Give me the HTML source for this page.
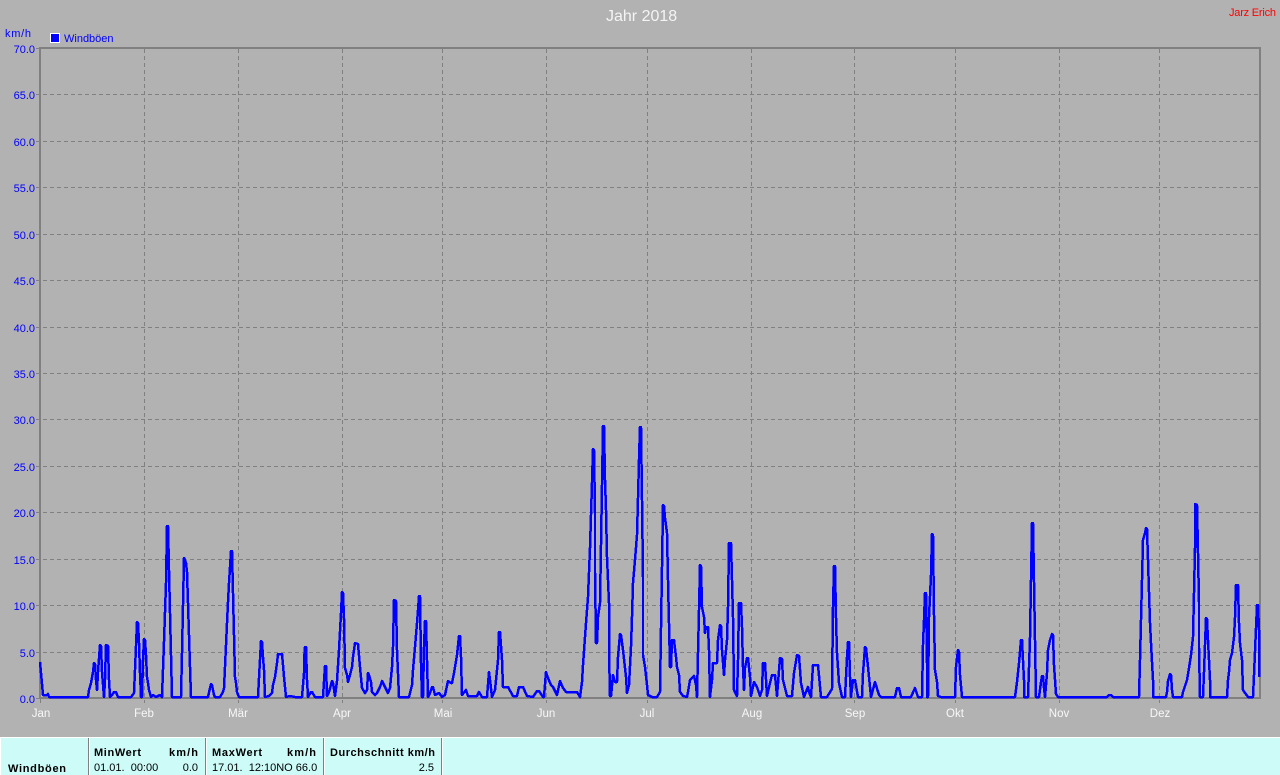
<!DOCTYPE html>
<html><head><meta charset="utf-8"><style>
html,body{margin:0;padding:0;width:1280px;height:775px;overflow:hidden;background:#b2b2b2}
svg{display:block}
text{font-family:"Liberation Sans",sans-serif;font-size:11px}
.y{fill:#0000ff;text-anchor:end}
.m{fill:#f8f8f8;text-anchor:middle;font-size:11.5px}
.b{font-weight:bold;fill:#000}
.t{fill:#000}
.r{text-anchor:end}
</style></head><body>
<svg width="1280" height="775" viewBox="0 0 1280 775" xmlns="http://www.w3.org/2000/svg">
<rect width="1280" height="775" fill="#b2b2b2"/>
<g stroke="#808080" stroke-width="1" stroke-dasharray="4 3" shape-rendering="crispEdges" fill="none">
<path d="M36 94.5H1259M36 141.5H1259M36 187.5H1259M36 234.5H1259M36 280.5H1259M36 327.5H1259M36 373.5H1259M36 419.5H1259M36 466.5H1259M36 512.5H1259M36 559.5H1259M36 605.5H1259M36 652.5H1259"/>
<path d="M144.5 49V703M238.5 49V703M342.5 49V703M442.5 49V703M546.5 49V703M647.5 49V703M751.5 49V703M854.5 49V703M955.5 49V703M1059.5 49V703M1159.5 49V703"/>
</g>
<path d="M40 48H1260V698H40Z" fill="none" stroke="#808080" stroke-width="2.4" shape-rendering="crispEdges"/>
<path d="M36 48.5H40M36 698.5H40M40.5 698V703" stroke="#808080" stroke-width="1" shape-rendering="crispEdges"/>
<polyline fill="none" stroke="#0000ff" stroke-width="2.5" stroke-linejoin="round" shape-rendering="crispEdges" points="40,662 41,673 42,684 43,695 47,695 48,694 49,697 50,697 79,697 80,697 88,697 89,690 91,683 93,672 94,663 95,664 96,680 97,690 98,672 100,645 101,646 102,672 104,697 105,680 106,645 108,646 109,680 110,697 112,695 114,692 116,692 118,697 131,697 134,693 135,670 137,622 138,623 139,643 140,673 141,697 142,697 143,660 144,639 145,640 146,655 147,677 148,683 149,690 151,697 153,695 156,697 160,695 162,697 164,642 166,583 167,526 168,526 169,570 170,613 171,655 172,697 181,697 182,653 183,605 184,558 185,560 186,563 187,572 188,603 189,635 190,667 191,697 197,697 202,697 208,697 210,688 211,684 212,685 214,695 215,697 220,697 223,692 224,688 225,667 226,645 227,623 228,602 229,583 230,567 231,551 232,551 233,593 234,635 235,677 236,683 237,692 239,697 257,697 258,697 259,678 261,641 262,642 263,657 264,670 265,697 269,696 272,693 273,685 275,677 277,663 278,654 282,654 283,665 284,677 286,697 290,696 295,697 302,697 303,685 304,673 304,660 305,647 306,647 307,680 308,697 311,692 312,692 315,697 320,697 323,697 325,666 326,666 327,696 329,692 332,681 333,683 335,696 337,681 339,650 341,613 342,592 343,593 344,618 345,668 347,675 348,682 350,675 352,667 353,657 355,643 358,644 360,667 362,688 365,693 367,690 368,673 369,675 371,682 372,692 375,695 377,693 380,687 382,681 385,687 388,693 390,688 392,667 393,647 394,600 396,601 397,650 399,697 409,697 412,685 413,670 415,647 417,623 418,610 419,596 420,596 421,663 422,697 423,697 424,647 425,621 426,621 427,660 428,697 430,693 432,687 433,687 435,695 437,694 439,693 442,697 445,695 448,681 451,683 452,683 454,673 457,655 459,636 460,636 461,657 462,695 466,690 468,696 477,696 479,692 482,697 487,697 489,672 490,680 492,697 495,690 498,660 499,632 500,632 502,660 503,687 508,687 513,696 517,696 519,687 523,687 527,696 533,697 537,691 539,691 543,697 544,697 546,672 548,678 551,685 553,687 557,695 560,681 563,688 566,692 577,692 580,697 582,682 583,665 586,623 588,597 590,548 591,515 592,483 593,449 594,450 595,513 595,573 596,643 597,643 598,617 600,603 601,545 602,485 603,426 604,426 605,480 606,510 607,557 609,603 609,650 610,696 611,696 613,675 615,682 617,682 618,657 620,634 621,635 623,650 626,677 627,693 629,685 631,647 632,617 633,583 635,560 637,535 638,498 639,460 640,427 641,427 642,500 643,577 643,655 645,667 647,685 648,695 652,697 657,697 660,692 661,628 662,567 663,505 664,506 665,518 667,533 668,580 669,623 670,667 671,667 672,640 674,640 676,657 677,667 679,675 680,692 683,696 687,697 688,692 690,680 694,676 696,685 697,697 698,653 699,610 700,565 701,566 702,607 704,617 705,633 706,627 708,627 709,650 710,697 712,680 713,663 717,663 718,640 720,625 721,626 722,650 724,675 725,660 727,640 728,607 729,543 731,543 732,580 733,617 734,690 737,696 738,660 739,603 741,603 742,627 743,667 744,690 745,668 747,658 748,658 750,677 751,696 754,682 757,687 760,696 762,690 763,663 765,663 767,696 770,683 772,675 775,675 777,696 780,658 782,659 783,680 787,696 792,696 794,673 797,655 799,656 801,683 804,697 808,687 809,692 811,697 813,665 818,665 821,697 827,697 832,689 833,607 834,566 835,566 836,618 837,653 839,683 842,697 845,697 847,657 848,642 849,642 850,677 851,697 853,680 855,680 858,697 862,697 863,673 865,647 866,648 868,667 871,697 875,682 879,695 881,697 895,697 897,688 899,688 901,697 911,697 915,688 918,697 922,697 923,645 924,620 925,593 926,593 927,663 927,697 928,697 929,617 931,575 932,534 933,535 934,615 935,670 937,682 938,696 941,697 945,697 947,697 953,697 955,697 956,667 958,650 959,652 960,675 962,697 968,697 969,697 1015,697 1017,682 1019,663 1021,640 1022,640 1024,680 1024,697 1028,697 1030,638 1031,580 1032,523 1033,523 1034,582 1035,640 1036,697 1039,697 1041,682 1042,676 1043,676 1044,688 1045,697 1047,673 1048,650 1050,640 1052,634 1053,635 1054,665 1056,694 1058,697 1107,697 1109,695 1111,695 1113,697 1139,697 1140,660 1141,620 1142,580 1143,540 1145,533 1146,528 1147,529 1148,560 1149,592 1150,623 1151,643 1152,662 1153,680 1153,697 1166,697 1167,692 1168,681 1170,674 1171,675 1172,690 1173,697 1182,697 1183,692 1187,680 1189,668 1191,655 1193,637 1194,593 1195,548 1195,504 1197,505 1198,553 1199,602 1199,648 1200,697 1203,697 1204,672 1205,645 1206,618 1207,619 1208,640 1209,660 1210,680 1210,697 1227,697 1228,680 1229,672 1230,660 1232,653 1234,637 1235,618 1236,585 1238,585 1239,623 1240,643 1242,660 1243,690 1245,693 1248,697 1253,697 1254,675 1256,628 1257,605 1258,605 1259,630 1259,677"/>
<text x="606" y="21" fill="#f4f4f4" style="font-size:16px">Jahr 2018</text>
<text x="1229" y="16" fill="#ff0000" textLength="47" lengthAdjust="spacing">Jarz Erich</text>
<text x="5" y="37" fill="#0000ff" textLength="26" lengthAdjust="spacing">km/h</text>
<rect x="50.5" y="33.5" width="9" height="9" fill="#0000ff" stroke="#fff" stroke-width="1" shape-rendering="crispEdges"/>
<text x="64" y="42" fill="#0000ff">Windböen</text>
<g class="y">
<text class="y" x="35" y="53">70.0</text><text class="y" x="35" y="99">65.0</text><text class="y" x="35" y="146">60.0</text><text class="y" x="35" y="192">55.0</text><text class="y" x="35" y="239">50.0</text><text class="y" x="35" y="285">45.0</text><text class="y" x="35" y="332">40.0</text><text class="y" x="35" y="378">35.0</text><text class="y" x="35" y="424">30.0</text><text class="y" x="35" y="471">25.0</text><text class="y" x="35" y="517">20.0</text><text class="y" x="35" y="564">15.0</text><text class="y" x="35" y="610">10.0</text><text class="y" x="35" y="657">5.0</text><text class="y" x="35" y="703">0.0</text>
</g>
<text class="m" x="41" y="717">Jan</text><text class="m" x="144" y="717">Feb</text><text class="m" x="238" y="717">Mär</text><text class="m" x="342" y="717">Apr</text><text class="m" x="443" y="717">Mai</text><text class="m" x="546" y="717">Jun</text><text class="m" x="647" y="717">Jul</text><text class="m" x="752" y="717">Aug</text><text class="m" x="855" y="717">Sep</text><text class="m" x="955" y="717">Okt</text><text class="m" x="1059" y="717">Nov</text><text class="m" x="1160" y="717">Dez</text>
<rect x="0" y="737" width="1280" height="38" fill="#ccfbf8"/>
<path d="M0 737.5H1280M0.5 737V775" stroke="#fff" stroke-width="1" shape-rendering="crispEdges"/>
<g shape-rendering="crispEdges">
<rect x="88" y="738" width="1" height="37" fill="#808080"/><rect x="89" y="738" width="1" height="37" fill="#fff"/>
<rect x="205" y="738" width="1" height="37" fill="#808080"/><rect x="206" y="738" width="1" height="37" fill="#fff"/>
<rect x="323" y="738" width="1" height="37" fill="#808080"/><rect x="324" y="738" width="1" height="37" fill="#fff"/>
<rect x="441" y="738" width="1" height="37" fill="#808080"/><rect x="442" y="738" width="1" height="37" fill="#fff"/>
</g>
<text class="b" x="8" y="772" textLength="58" lengthAdjust="spacing">Windböen</text>
<text class="b" x="94" y="756" textLength="47" lengthAdjust="spacing">MinWert</text><text class="b" x="169" y="756" textLength="29" lengthAdjust="spacing">km/h</text>
<text class="t" x="94" y="771" xml:space="preserve">01.01.  00:00</text><text class="t r" x="198" y="771">0.0</text>
<text class="b" x="212" y="756" textLength="50" lengthAdjust="spacing">MaxWert</text><text class="b" x="287" y="756" textLength="29" lengthAdjust="spacing">km/h</text>
<text class="t" x="212" y="771" xml:space="preserve">17.01.  12:10NO 66.0</text>
<text class="b" x="330" y="756" textLength="105" lengthAdjust="spacing">Durchschnitt km/h</text><text class="t r" x="434" y="771">2.5</text>
</svg>
</body></html>
